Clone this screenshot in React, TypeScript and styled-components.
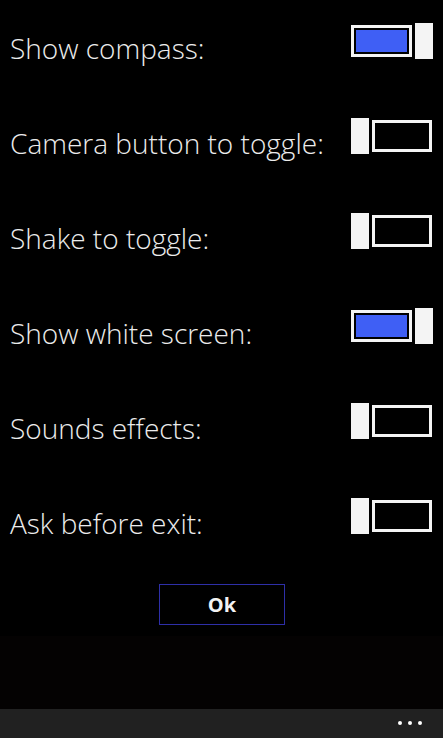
import React, { useState } from 'react';
import styled, { createGlobalStyle } from 'styled-components';

const GlobalStyle = createGlobalStyle`
  html, body {
    margin: 0;
    padding: 0;
    background: #000;
  }
  body {
    font-family: "Open Sans", "Noto Sans", sans-serif;
    color: #ececec;
  }
`;

type Setting = { label: string; on: boolean };

const initial: Setting[] = [
  { label: 'Show compass:', on: true },
  { label: 'Camera button to toggle:', on: false },
  { label: 'Shake to toggle:', on: false },
  { label: 'Show white screen:', on: true },
  { label: 'Sounds effects:', on: false },
  { label: 'Ask before exit:', on: false },
];

const App: React.FC = () => {
  const [settings, setSettings] = useState(initial);

  const flip = (i: number) =>
    setSettings((s) => s.map((it, j) => (j === i ? { ...it, on: !it.on } : it)));

  return (
    <Page>
      <GlobalStyle />
      <Content>
        <List>
          {settings.map((s, i) => (
            <Row key={s.label}>
              <Label>{s.label}</Label>
              <Toggle onClick={() => flip(i)} aria-pressed={s.on}>
                {s.on ? (
                  <>
                    <Track $on>
                      <Fill />
                    </Track>
                    <Thumb />
                  </>
                ) : (
                  <>
                    <Thumb />
                    <Track />
                  </>
                )}
              </Toggle>
            </Row>
          ))}
        </List>
        <ButtonRow>
          <OkButton>Ok</OkButton>
        </ButtonRow>
      </Content>
      <Spacer />
      <AppBar>
        <Dots>
          <Dot />
          <Dot />
          <Dot />
        </Dots>
      </AppBar>
    </Page>
  );
};

const Page = styled.div`
  width: 443px;
  height: 738px;
  display: flex;
  flex-direction: column;
  background: #000;
  overflow: hidden;
`;

const Content = styled.div`
  height: 636px;
  display: flex;
  flex-direction: column;
`;

const List = styled.div`
  display: flex;
  flex-direction: column;
`;

const Row = styled.div`
  height: 95px;
  display: flex;
  align-items: center;
  justify-content: space-between;
  padding: 0 10px 0 10px;
`;

const Label = styled.span`
  font-size: 28px;
  font-weight: 300;
  letter-spacing: 0;
  color: #ececec;
`;

const Toggle = styled.button`
  display: flex;
  align-items: center;
  gap: 3px;
  width: 82px;
  height: 36px;
  padding: 0;
  margin: 0 0 13px 0;
  border: none;
  background: transparent;
  cursor: pointer;
`;

const Track = styled.div<{ $on?: boolean }>`
  box-sizing: border-box;
  width: ${(p) => (p.$on ? '61px' : '60px')};
  height: 32px;
  border: 3px solid #f4f4f4;
  padding: 2px;
  display: flex;
`;

const Fill = styled.div`
  flex: 1;
  background: #3f5ff5;
`;

const Thumb = styled.div`
  width: 18px;
  height: 36px;
  background: #f4f4f4;
`;

const ButtonRow = styled.div`
  display: flex;
  justify-content: center;
  margin-top: 14px;
`;

const OkButton = styled.button`
  width: 126px;
  height: 41px;
  box-sizing: border-box;
  margin-left: 1px;
  border: 1.5px solid #2e2fa8;
  background: #000;
  color: #f2f2f2;
  font-family: "Open Sans", "Noto Sans", sans-serif;
  font-size: 20px;
  font-weight: 700;
  cursor: pointer;
`;

const Spacer = styled.div`
  flex: 1;
  background: #040202;
`;

const AppBar = styled.div`
  height: 29px;
  background: #212121;
  display: flex;
  align-items: center;
  justify-content: flex-end;
  padding-right: 21px;
`;

const Dots = styled.div`
  display: flex;
  gap: 6px;
  margin-bottom: 2px;
`;

const Dot = styled.span`
  width: 4px;
  height: 4px;
  border-radius: 50%;
  background: #fff;
`;

export default App;
